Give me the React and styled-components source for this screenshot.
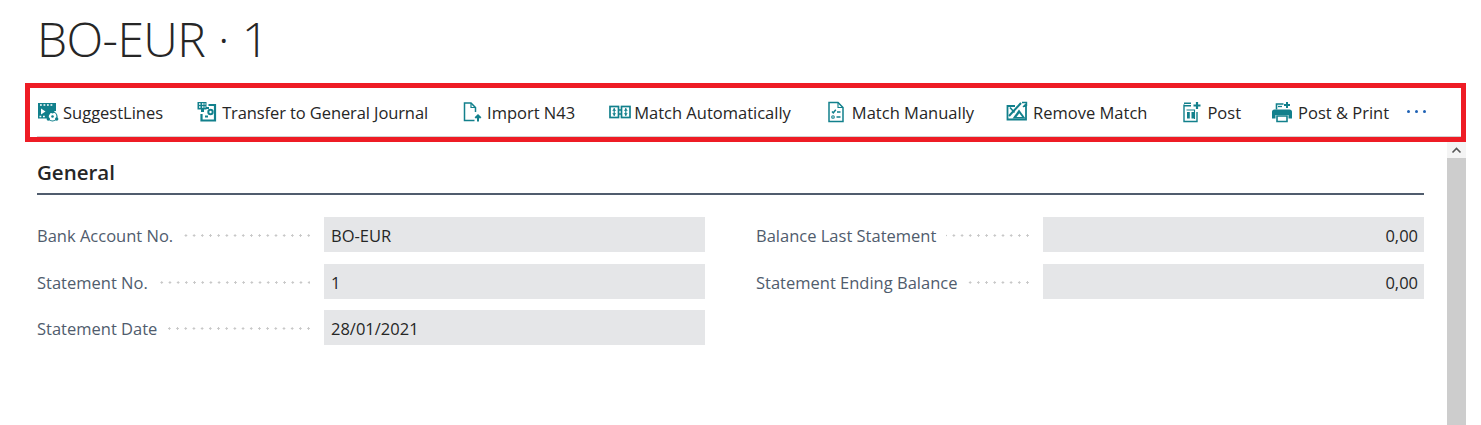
import React from "react";
import styled, { createGlobalStyle } from "styled-components";

const Global = createGlobalStyle`
  html, body {
    margin: 0;
    height: 100%;
    overflow: hidden;
    background: #fff;
    font-family: "Open Sans", "Noto Sans", sans-serif;
  }
`;

const Page = styled.div`
  display: flex;
  flex-direction: column;
  height: 425px;
`;

const Title = styled.h1`
  margin: 0;
  height: 83px;
  padding: 10px 0 0 37px;
  box-sizing: border-box;
  font-weight: 300;
  font-size: 48px;
  line-height: 58px;
  letter-spacing: -0.6px;
  word-spacing: 1px;
  color: #262626;
`;

const ActionBar = styled.div`
  box-sizing: border-box;
  margin-left: 25px;
  width: 1441px;
  height: 59px;
  flex: none;
  border: 5px solid #ee1c25;
`;

const ActionRow = styled.div`
  display: flex;
  align-items: center;
  box-sizing: border-box;
  height: 49px;
  margin-left: 7px;
  border-bottom: 1px solid #d2d2d2;
  padding-top: 1px;
`;

const Action = styled.div`
  display: flex;
  align-items: center;
  gap: ${(p) => p.$gap || 6}px;
  margin-right: ${(p) => p.$after || 33}px;
  font-size: 16.5px;
  letter-spacing: ${(p) => p.$tight || 0}px;
  color: #262626;
  white-space: nowrap;

  svg {
    margin-top: -1px;
  }
`;

const Dots = styled.div`
  display: flex;
  gap: 5px;
  margin: -2px 0 0 -15px;

  i {
    width: 3px;
    height: 3px;
    border-radius: 50%;
    background: #1f62b5;
  }
`;

const Body = styled.div`
  flex: 1;
  display: flex;
  min-height: 0;
`;

const Content = styled.div`
  box-sizing: border-box;
  width: 1447px;
  padding: 18px 23px 0 37px;
`;

const SectionTitle = styled.h2`
  margin: 0;
  height: 33px;
  box-sizing: border-box;
  font-size: 20.5px;
  line-height: 25px;
  font-weight: 600;
  color: #262626;
`;

const Rule = styled.div`
  height: 2px;
  background: #505c6d;
  margin-bottom: 22px;
`;

const Columns = styled.div`
  display: grid;
  grid-template-columns: 668px 668px;
  column-gap: 51px;
`;

const Column = styled.div`
  display: flex;
  flex-direction: column;
  gap: 11.5px;
`;

const Row = styled.div`
  display: grid;
  grid-template-columns: 273px 381px;
  column-gap: 14px;
  align-items: center;
`;

const Label = styled.div`
  display: flex;
  align-items: center;
  gap: 10px;
  padding-top: 2px;
  font-size: 16.5px;
  color: #505c6d;
  white-space: nowrap;
`;

const Leader = styled.span`
  flex: 1;
  height: 3px;
  background-image: radial-gradient(circle at center, #c8c8c8 1px, transparent 1.2px);
  background-size: 8.2px 3px;
  background-position: right -3px center;
`;

const Field = styled.div`
  box-sizing: border-box;
  height: 35px;
  padding: 1px 6px 0 7px;
  background: #e5e6e8;
  font-size: 16.5px;
  line-height: 35px;
  color: #262626;
  text-align: ${(p) => (p.$right ? "right" : "left")};
`;

const Scrollbar = styled.div`
  width: 19px;
  display: flex;
  flex-direction: column;
`;

const ScrollButton = styled.div`
  height: 16px;
  background: #f4f4f4;
  display: flex;
  align-items: center;
  justify-content: center;
`;

const ScrollThumb = styled.div`
  flex: 1;
  background: #cdcdcd;
`;

const Icon = ({ children }) => (
  <svg width="22" height="22" viewBox="0 0 22 22" fill="none" stroke="#12808c" strokeWidth="1.2" style={{ flex: "none" }}>
    {children}
  </svg>
);

const teal = "#12808c";

const SuggestIcon = () => (
  <Icon>
    <path d="M1 2h18v8a7 7 0 0 0-7.500 7.500H1z" fill={teal} stroke="none" />
    <path d="M3 4h1.800M6.500 4h1.800M10 4h1.800M13.500 4h1.800" stroke="#fff" strokeWidth="1.600" />
    <path d="M2.500 15.500h1.800M6 15.500h1.800" stroke="#fff" strokeWidth="1.400" />
    <path d="M4 7.500l4.500 3-4.500 3z" fill="#fff" stroke="none" />
    <circle cx="15.500" cy="15.500" r="4.500" strokeWidth="1.200" />
    <circle cx="15.500" cy="10.800" r="1.700" fill={teal} stroke="none" />
    <circle cx="11.300" cy="18" r="1.700" fill={teal} stroke="none" />
    <circle cx="19.700" cy="18" r="1.700" fill={teal} stroke="none" />
    <circle cx="15.500" cy="15.500" r="1.300" fill={teal} stroke="none" />
  </Icon>
);

const TransferIcon = () => (
  <Icon>
    <path d="M1.500 1h9v7.500H8v2.500H5V8.500H1.500z" fill={teal} stroke="none" />
    <path d="M3 3h1.500M6 3h1.500M8.500 3h1M3 6h1.500M6 6h1.500M8.500 6h1" stroke="#fff" strokeWidth="1.300" />
    <path d="M12.500 4h6.500v15.500H5.500V13" strokeWidth="2.200" />
    <circle cx="14.500" cy="11" r="3.200" fill={teal} stroke="none" />
    <circle cx="14.500" cy="11" r="1.200" fill="#fff" stroke="none" />
    <path d="M10 7h3M9 15.500h3" strokeWidth="1.800" />
  </Icon>
);

const ImportIcon = () => (
  <Icon>
    <path d="M14.500 11V6.500L10 2H3.500v17.500h10" strokeWidth="1.500" />
    <path d="M10 2v4.500h4.500" strokeWidth="1.200" />
    <path d="M17 20.500v-6M14.300 17l2.700-2.700 2.700 2.700" strokeWidth="2" />
  </Icon>
);

const MatchAutoIcon = () => (
  <Icon>
    <rect x="1" y="5.500" width="8.500" height="11" strokeWidth="1.700" />
    <rect x="12.500" y="5.500" width="8.500" height="11" strokeWidth="1.700" />
    <path d="M5.200 7v8M16.800 7v8" strokeWidth="1.100" />
    <path d="M3.200 9.800h4L5.200 7.400zM3.200 12.200h4L5.200 14.600zM14.800 9.800h4l-2-2.400zM14.800 12.200h4l-2 2.400z" fill={teal} stroke="none" />
    <path d="M9.800 9h2.400M9.800 13h2.400" strokeWidth="1.500" />
  </Icon>
);

const MatchManualIcon = () => (
  <Icon>
    <path d="M4 1.500h9l5 5v14H4z" strokeWidth="1.500" />
    <path d="M13 1.500v5h5" strokeWidth="1.100" />
    <path d="M7 10.500l1.300 1.300 2.500-3" strokeWidth="1.500" />
    <circle cx="8" cy="16" r="1.300" strokeWidth="1.100" />
    <path d="M12 11h3.500M11.500 16h4" strokeWidth="1.500" />
  </Icon>
);

const RemoveMatchIcon = () => (
  <Icon>
    <path d="M9 5H1.500v13.500H20V5h-2" strokeWidth="1.800" />
    <path d="M6.500 17.500L13 8.500l6.500 9z" fill={teal} stroke="none" />
    <path d="M10.500 16l2.800-3.800 2.800 3.800z" fill="#fff" stroke="none" />
    <path d="M3 15L15 2" strokeWidth="2" />
    <path d="M4 6.500l4.500 5" strokeWidth="1.600" />
    <path d="M16 1.500h4.500V5M17 6l3-3" strokeWidth="1.400" />
  </Icon>
);

const PostIcon = () => (
  <Icon>
    <path d="M3 3.500V20.500h13V11" strokeWidth="1.400" />
    <path d="M3 2.200h7M3 4.800h7" strokeWidth="1.500" />
    <path d="M5.500 9h8v9" strokeWidth="1.100" />
    <path d="M6 11h2.800v6.500H6zM10.500 11h2.800v6.500h-2.800z" fill={teal} stroke="none" />
    <path d="M16 1v7M12.500 4.500h7" strokeWidth="2.200" />
  </Icon>
);

const PrintIcon = () => (
  <Icon>
    <path d="M1 11a2.500 2.500 0 0 1 2.500-2.500h15A2.500 2.500 0 0 1 21 11v6.500h-3.500V14h-13v3.500H1z" fill={teal} stroke="none" />
    <path d="M5.500 8.500V3h7" strokeWidth="1.600" />
    <path d="M6 15h10v5.500H6z" strokeWidth="1.600" />
    <path d="M7 5.500h4" strokeWidth="1.300" />
    <path d="M16 1v6M13 4h6" strokeWidth="2" />
  </Icon>
);

const actions = [
  { icon: <SuggestIcon />, label: "SuggestLines", gap: 4 },
  { icon: <TransferIcon />, label: "Transfer to General Journal", gap: 4, tight: -0.1 },
  { icon: <ImportIcon />, label: "Import N43", gap: 4, after: 34 },
  { icon: <MatchAutoIcon />, label: "Match Automatically", gap: 3, after: 34 },
  { icon: <MatchManualIcon />, label: "Match Manually", gap: 5, after: 32 },
  { icon: <RemoveMatchIcon />, label: "Remove Match", gap: 5, after: 34 },
  { icon: <PostIcon />, label: "Post", gap: 4, after: 30 },
  { icon: <PrintIcon />, label: "Post & Print", gap: 5 },
];

const left = [
  ["Bank Account No.", "BO-EUR"],
  ["Statement No.", "1"],
  ["Statement Date", "28/01/2021"],
];

const right = [
  ["Balance Last Statement", "0,00"],
  ["Statement Ending Balance", "0,00"],
];

function FieldRow({ label, value, alignRight }) {
  return (
    <Row>
      <Label>
        {label}
        <Leader />
      </Label>
      <Field $right={alignRight}>{value}</Field>
    </Row>
  );
}

export default function App() {
  return (
    <Page>
      <Global />
      <Title>BO-EUR · 1</Title>
      <ActionBar>
        <ActionRow>
          {actions.map((a) => (
            <Action key={a.label} $gap={a.gap} $tight={a.tight} $after={a.after}>
              {a.icon}
              {a.label}
            </Action>
          ))}
          <Dots>
            <i />
            <i />
            <i />
          </Dots>
        </ActionRow>
      </ActionBar>
      <Body>
        <Content>
          <SectionTitle>General</SectionTitle>
          <Rule />
          <Columns>
            <Column>
              {left.map(([l, v]) => (
                <FieldRow key={l} label={l} value={v} />
              ))}
            </Column>
            <Column>
              {right.map(([l, v]) => (
                <FieldRow key={l} label={l} value={v} alignRight />
              ))}
            </Column>
          </Columns>
        </Content>
        <Scrollbar>
          <ScrollButton>
            <svg width="11" height="7" viewBox="0 0 11 7" fill="none" stroke="#555" strokeWidth="1.600">
              <path d="M1.500 5.500l4-4 4 4" />
            </svg>
          </ScrollButton>
          <ScrollThumb />
        </Scrollbar>
      </Body>
    </Page>
  );
}
